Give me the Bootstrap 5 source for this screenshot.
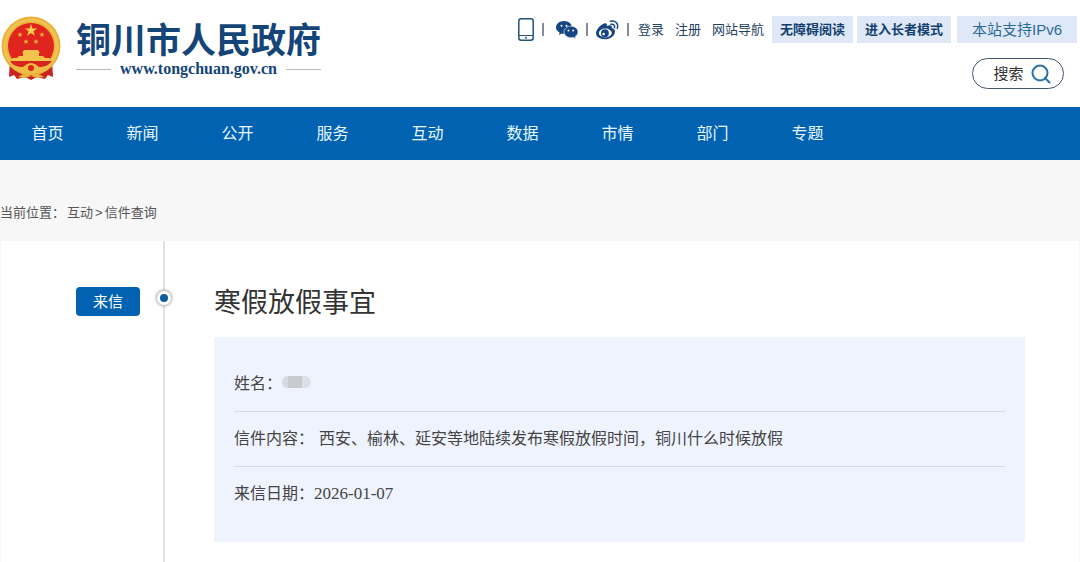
<!DOCTYPE html>
<html lang="zh-CN">
<head>
<meta charset="utf-8">
<meta name="viewport" content="width=device-width, initial-scale=1">
<title>铜川市人民政府 - 信件查询</title>
<link href="https://cdn.jsdelivr.net/npm/bootstrap@5.3.0/dist/css/bootstrap.min.css" rel="stylesheet">
<style>
body{font-family:"Liberation Sans","Noto Sans CJK SC",sans-serif;background:#f7f7f7;color:#444}
a{text-decoration:none;color:inherit}
.site-head{padding:16px 0 18px}
.brand{gap:15px;padding-left:1px;color:#154578}
.brand-name{font:700 35px/38px "Noto Sans CJK SC",sans-serif;margin:3px 0}
.brand-url{font:700 16px/18px "Liberation Serif",serif;gap:9px}
.brand-url::before,.brand-url::after{content:"";flex:1;height:1px;background:#b4b8bf}
.tools{font-size:13px;line-height:27px;color:#23415f;padding-right:3px}
.social{gap:8px;margin-right:9px}
.divider{width:2px;height:13px;background:#878d94}
.text-links{gap:11px;margin-right:8px}
.tag{background:#dfe8f6;color:#123f70;font-weight:700;padding:0 8px;margin-right:4px}
.tag-wide{background:#dfe8f6;color:#2b6b9a;font-size:15px;padding:0 15px;margin-left:2px}
.search-btn{width:92px;height:31px;font-size:15px;line-height:29px;border:1px solid #3f566c;border-radius:16px;background:#fff;color:#333;gap:7px;padding:0 0 0 8px;margin:15px 16px 0 0}
.main-nav{background:#0062b1}
.main-nav .nav-link{width:95px;padding:0;text-align:center;font-size:16px;line-height:53px;color:#e9f8ff}
.crumbs{font-size:13px;line-height:20px;padding:43px 0 18px;gap:2px;color:#555}
.panel{background:#fff;margin:0 1px}
.rail{width:164px;border-right:2px solid #e2e2e2;padding-top:46px}
.rail-tag{background:#0062b1;color:#fff;width:64px;font-size:15px;line-height:29px;border-radius:4px;margin-right:23px}
.rail-dot{right:-8px;top:50px;width:14px;height:14px;border-radius:50%;background:#0d5ca0;border:3px solid #fff;box-shadow:0 0 3px 1px #aaa}
.letter{padding:42px 54px 21px 49px}
.letter h1{font-size:27px;line-height:40px;font-weight:400;color:#333;margin:0 0 14px}
.letter-box{background:#eff3fe;padding:20px}
.field{font-size:16px;line-height:54px;border-bottom:1px solid #cfdbea;margin:0}
.field:last-child{border-color:transparent}
.field dt{font-weight:400}
.field dd{margin:0}
.field .text-gap{padding-left:5px}
.field .field-date{font:17px/54px "Liberation Serif",serif}
.field .masked{width:29px;height:12px;border-radius:6px;background:linear-gradient(90deg,#d6d9df 0 20%,#c9cbd0 20% 68%,#dcdfe8 68%);margin-bottom:4px}
</style>
</head>
<body>
<div class="min-vh-100 d-flex flex-column">
<header class="site-head bg-white d-flex justify-content-between align-items-start">
  <a href="#" class="brand d-flex align-items-start">
    <svg width="60" height="65" viewBox="0 0 60 65" aria-hidden="true">
      <path d="M9 44 8 61l5-2 3 4 8-2 6 3 6-3 8 2 3-4 5 2-1-17z" fill="#c9231d"/>
      <circle cx="30" cy="30" r="29.500" fill="#e8b33c"/>
      <circle cx="30" cy="30" r="26" fill="none" stroke="#f0c250" stroke-width="3"/>
      <circle cx="30" cy="30" r="23" fill="#df251d"/>
      <path d="m30 8 1.500 4.500h4.700l-3.800 2.800 1.500 4.500-3.900-2.800-3.900 2.800 1.500-4.500-3.800-2.800h4.700z" fill="#f7d14c"/>
      <g fill="#f2b93c"><path id="s" d="m19 16 .7 1.800h2l-1.600 1.200.6 2-1.700-1.200-1.700 1.200.6-2-1.600-1.200h2z"/><use href="#s" x="22"/><use href="#s" x="6" y="7"/><use href="#s" x="16" y="7"/></g>
      <path d="M23 34h14l2 3H21zm-1 3h16v3h4l2 2H16l2-2h4zM12 42h36l3 3H9z" fill="#f4c54b"/>
      <path d="M9 45h42c-4 5-8 7-11 10-3-5-17-5-20 0-4-3-8-5-11-10z" fill="#d6261d"/>
      <path d="M8 44c4 6 9 7 14 7l4-3h8l4 3c5 0 10-1 14-7-2 8-7 12-13 12-3 0-5-2-9-2s-6 2-9 2C15 56 10 52 8 44z" fill="#efbd46"/>
      <circle cx="30" cy="52" r="4" fill="#df251d" stroke="#efbd46" stroke-width="2"/>
      <path d="m17 61 7-4 6 3 6-3 7 4-7 1-6-2-6 2z" fill="#e8b33c"/>
    </svg>
    <div>
      <div class="brand-name">铜川市人民政府</div>
      <div class="brand-url d-flex align-items-center">www.tongchuan.gov.cn</div>
    </div>
  </a>
  <div class="d-flex flex-column align-items-end">
    <div class="tools d-flex align-items-center">
      <div class="social d-flex align-items-center">
        <a href="#" class="d-flex" aria-label="手机版"><svg width="16" height="23" viewBox="0 0 16 23" fill="none" stroke="#24527d"><rect x=".8" y=".8" width="14.400" height="21.400" rx="2.500" stroke-width="1.500"/><path d="M1 17.500h14"/><circle cx="8" cy="19.800" r="1" fill="#24527d" stroke="none"/></svg></a>
        <span class="divider"></span>
        <a href="#" class="d-flex ms-1" aria-label="微信"><svg width="22" height="18" viewBox="0 0 22 18"><path d="M8 0c4.600 0 8 2.900 8 6.500S12.600 13 8 13l-2.200-.4L3 14l.6-2.500C1.300 10.300 0 8.500 0 6.500 0 2.900 3.500 0 8 0z" fill="#154582"/><path d="M15 5.200c4 0 7 2.500 7 5.700 0 1.800-1 3.300-2.600 4.400l.5 2.300-2.500-1.200-2.400.3c-4 0-7-2.600-7-5.800s3-5.700 7-5.700z" fill="#154582" stroke="#fff" stroke-width=".6"/><g fill="#fff"><circle cx="5.500" cy="4.800" r="1"/><circle cx="10.500" cy="4.800" r="1"/><circle cx="12.500" cy="9.500" r="1"/><circle cx="17.200" cy="9.500" r="1"/></g></svg></a>
        <span class="divider"></span>
        <a href="#" class="d-flex" aria-label="微博"><svg width="23" height="20" viewBox="0 0 23 20"><path d="M8 3.500c2-.8 3.500 0 2.800 2.500 3-1.300 5.800-1 5 2 2.500.7 3.700 2.400 3 4.700-.9 4-5.200 6.500-9.800 6.500C4 19.200 0 17 0 13.300 0 9.800 4.500 4.800 8 3.500z" fill="#154582"/><ellipse cx="9.300" cy="13" rx="6.500" ry="4.400" fill="#fff"/><circle cx="8.900" cy="13.200" r="3.900" fill="#154582"/><circle cx="7.600" cy="14" r="1.300" fill="#fff"/><path d="M14.500 1.200c4.700-1.200 8.300 2.300 6.800 7M15 4.300c2.500-.5 4.200 1 3.400 3.500" fill="none" stroke="#154582" stroke-width="1.500" stroke-linecap="round"/></svg></a>
        <span class="divider"></span>
      </div>
      <div class="text-links d-flex"><a href="#">登录</a><a href="#">注册</a><a href="#">网站导航</a></div>
      <a href="#" class="tag">无障碍阅读</a>
      <a href="#" class="tag">进入长者模式</a>
      <a href="#" class="tag-wide">本站支持IPv6</a>
    </div>
    <button type="button" class="search-btn d-flex align-items-center justify-content-center">搜索<svg width="20" height="20" viewBox="0 0 20 20" fill="none" stroke="#2874a6" stroke-width="2"><circle cx="9" cy="9" r="7.500"/><path d="m14 14 4.500 4.500" stroke-linecap="round"/></svg></button>
  </div>
</header>
<nav class="main-nav nav" aria-label="主导航">
  <a class="nav-link" href="#">首页</a><a class="nav-link" href="#">新闻</a><a class="nav-link" href="#">公开</a><a class="nav-link" href="#">服务</a><a class="nav-link" href="#">互动</a><a class="nav-link" href="#">数据</a><a class="nav-link" href="#">市情</a><a class="nav-link" href="#">部门</a><a class="nav-link" href="#">专题</a>
</nav>
<div class="crumbs d-flex"><span>当前位置：</span><a href="#">互动</a><span>&gt;</span><a href="#">信件查询</a></div>
<main class="panel d-flex flex-grow-1">
  <div class="rail position-relative flex-shrink-0 d-flex justify-content-end align-items-start">
    <span class="rail-tag text-center">来信</span>
    <span class="rail-dot position-absolute"></span>
  </div>
  <article class="letter flex-grow-1">
    <h1>寒假放假事宜</h1>
    <div class="letter-box">
      <dl class="field d-flex align-items-center"><dt>姓名：</dt><dd class="masked"></dd></dl>
      <dl class="field d-flex"><dt>信件内容：</dt><dd class="text-gap">西安、榆林、延安等地陆续发布寒假放假时间，铜川什么时候放假</dd></dl>
      <dl class="field d-flex"><dt>来信日期：</dt><dd class="field-date">2026-01-07</dd></dl>
    </div>
  </article>
</main>
</div>
<script src="https://cdn.jsdelivr.net/npm/bootstrap@5.3.0/dist/js/bootstrap.bundle.min.js"></script>
</body>
</html>
